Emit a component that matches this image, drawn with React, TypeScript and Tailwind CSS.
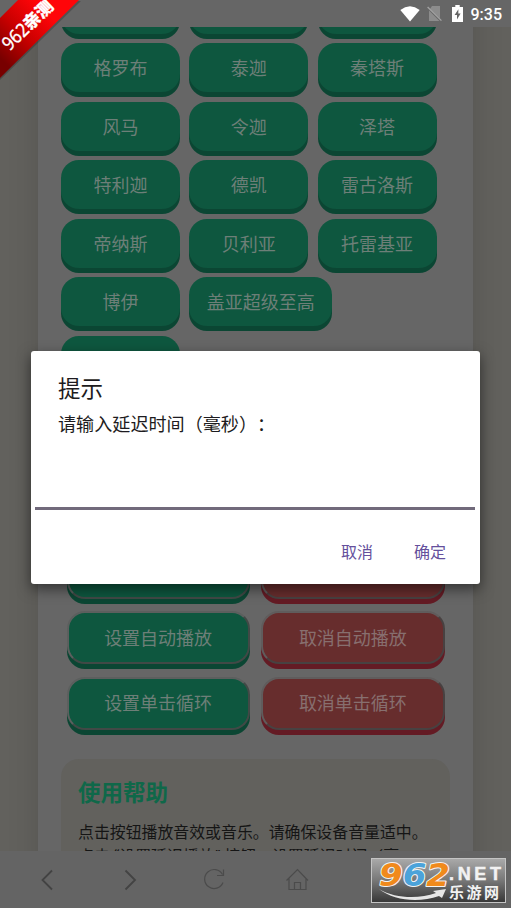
import React from "react";

const soundRows: string[][] = [
  ["", "", ""],
  ["格罗布", "泰迦", "秦塔斯"],
  ["风马", "令迦", "泽塔"],
  ["特利迦", "德凯", "雷古洛斯"],
  ["帝纳斯", "贝利亚", "托雷基亚"],
  ["博伊", "盖亚超级至高"],
  [""],
];

const controls = [
  { on: "设置延迟播放", off: "取消延迟播放" },
  { on: "设置自动播放", off: "取消自动播放" },
  { on: "设置单击循环", off: "取消单击循环" },
];

const StatusBar: React.FC = () => (
  <header className="absolute top-0 left-0 z-10 flex h-[27px] w-full items-center justify-end bg-[#666666] pr-[9px] text-white">
    <svg width="20" height="16" viewBox="0 0 20 16" className="mr-[7px]">
      <path d="M0.3 4 Q10 -3.4 19.7 4 L10 15.6 Z" fill="#fff" />
    </svg>
    <svg width="15" height="17" viewBox="0 0 15 17" className="mr-[10px]">
      <path d="M5 1 H13 V13.5 L3 4 Z M2 5.5 L12.5 16 H2 Z" fill="#8c8c8c" />
      <path d="M0.6 2 L14.4 15.6" stroke="#a3a3a3" strokeWidth="1.3" />
    </svg>
    <svg width="11" height="17" viewBox="0 0 11 17" className="mr-[8px]">
      <path d="M3.3 0 H7.7 V2 H11 V17 H0 V2 H3.3 Z" fill="#fff" />
      <path d="M6.4 4.2 L2.6 10 H5 V14.4 L8.6 8.4 H6.3 Z" fill="#666" />
    </svg>
    <span className="pt-[2px] font-[Roboto] text-[16px] leading-[27px] font-medium">
      9:35
    </span>
  </header>
);

const Ribbon: React.FC = () => (
  <svg
    className="absolute top-0 left-0 z-30"
    width="84"
    height="84"
    viewBox="0 0 84 84"
  >
    <defs>
      <linearGradient
        id="ribbon"
        gradientUnits="userSpaceOnUse"
        x1="8"
        y1="66"
        x2="54"
        y2="20"
      >
        <stop offset="0" stopColor="#780000" />
        <stop offset="0.5" stopColor="#c80000" />
        <stop offset="1" stopColor="#ff0509" />
      </linearGradient>
    </defs>
    <path d="M18 1 H81 L0 80 V19 Z" fill="#000" opacity="0.2" />
    <path d="M18 0 H79 L0 78 V18 Z" fill="url(#ribbon)" />
    <g
      transform="translate(9.5 51.5) rotate(-44)"
      fill="#fff"
      fontFamily="'Noto Sans', 'Noto Sans CJK SC', sans-serif"
    >
      <text
        x="0"
        y="0"
        fontSize="19"
        textLength="29"
        lengthAdjust="spacingAndGlyphs"
        stroke="#fff"
        strokeWidth="0.3"
      >
        962
      </text>
      <text
        x="29"
        y="-0.5"
        fontSize="17"
        fontWeight="900"
        stroke="#fff"
        strokeWidth="0.3"
      >
        亲测
      </text>
    </g>
  </svg>
);

const Watermark: React.FC = () => (
  <svg
    className="absolute top-[858px] left-[371px] z-30"
    width="135"
    height="45"
    viewBox="0 0 135 45"
  >
    <defs>
      <linearGradient id="plate" x1="0" y1="0" x2="0" y2="1">
        <stop offset="0" stopColor="#aaaaaa" />
        <stop offset="0.5" stopColor="#777777" />
        <stop offset="1" stopColor="#363636" />
      </linearGradient>
    </defs>
    <rect
      x="0.5"
      y="0.5"
      width="134"
      height="44"
      fill="url(#plate)"
      stroke="#c4c4c4"
    />
    <path
      d="M8 31 C25 41 48 41 65 35 L62 33 L75 31 L71 40 L68 38 C48 45 23 43 8 31 Z"
      fill="#e6e6e6"
    />
    <text
      x="8"
      y="27.5"
      fontFamily="'DejaVu Sans', sans-serif"
      fontWeight="700"
      fontStyle="italic"
      fontSize="32"
      textLength="71"
      lengthAdjust="spacingAndGlyphs"
      stroke="#f3f3f3"
      strokeWidth="2"
      strokeLinejoin="round"
      paintOrder="stroke"
    >
      <tspan fill="#f08a1c">9</tspan>
      <tspan fill="#4ba3da">6</tspan>
      <tspan fill="#f08a1c">2</tspan>
    </text>
    <text
      x="78"
      y="22"
      fontFamily="'Liberation Sans', sans-serif"
      fontWeight="700"
      fontSize="18"
      textLength="52"
      fill="#f2f2f2"
      stroke="#f2f2f2"
      strokeWidth="0.5"
    >
      .NET
    </text>
    <text
      x="78"
      y="39.5"
      fontFamily="'Noto Sans CJK SC', sans-serif"
      fontWeight="700"
      fontSize="15"
      textLength="50"
      fill="#f2f2f2"
    >
      乐游网
    </text>
  </svg>
);

const SoundButton: React.FC<{ label: string }> = ({ label }) => (
  <button className="h-[49px] min-w-[119px] rounded-[18px] bg-[#0e573f] px-[17.5px] pt-[2px] text-[18px] text-[#6d7f78] shadow-[0_5px_0_#0b4633]">
    {label}
  </button>
);

const NavBar: React.FC = () => (
  <nav className="absolute top-[851px] left-0 z-10 h-[57px] w-full bg-[#646464]">
    <svg width="511" height="57" viewBox="0 0 511 57" fill="none">
      <path d="M52 19.5 L42.5 29 L52 38.5" stroke="#434343" strokeWidth="1.8" />
      <path d="M125.5 19.5 L135 29 L125.5 38.5" stroke="#434343" strokeWidth="1.8" />
      <path
        d="M222.5 23.5 A9.5 9.5 0 1 0 223 31.5 M223.5 18.5 V24.5 H217"
        stroke="#4b4b4b"
        strokeWidth="1.2"
      />
      <path
        d="M286.5 29.5 L297.5 18.5 L308 29.5 M289 27 V38.5 H306 V27 M294.5 38.5 V31.5 H300.5 V38.5"
        stroke="#4b4b4b"
        strokeWidth="1.2"
      />
    </svg>
  </nav>
);

const PromptDialog: React.FC = () => (
  <div className="absolute top-[351px] left-[31px] z-20 flex h-[233px] w-[449px] flex-col rounded-[3px] bg-white pr-[5px] pl-1 shadow-[0_5px_14px_rgba(0,0,0,0.5)]">
    <h2 className="mt-[21px] pl-[23px] text-[22.5px] leading-[34px] text-[#1d1b20]">
      提示
    </h2>
    <p className="mt-[5px] pl-[23px] text-[18.1px] leading-[28px] text-[#1d1b20] [text-spacing-trim:space-all]">
      请输入延迟时间（毫秒）：
    </p>
    <div className="mt-[68px] h-[3px] bg-[#716a7b]" />
    <div className="mt-[29px] flex justify-end gap-[41px] pr-[29px] text-[16px] leading-[28px] text-[#65509c]">
      <button>取消</button>
      <button>确定</button>
    </div>
  </div>
);

export default function App() {
  return (
    <div className="relative h-[908px] w-[511px] overflow-hidden bg-[#62615d] font-['Roboto','Noto_Sans_CJK_SC',sans-serif]">
      <main className="mx-auto ml-[38px] h-full w-[435px] bg-[#666666] px-[23px] shadow-[0_0_30px_rgba(0,0,0,0.13)]">
        {/* Sound buttons */}
        <div className="-mt-[15.5px] flex flex-col gap-[9.5px]">
          {soundRows.map((row, i) => (
            <div key={i} className="flex h-[49px] gap-[9.3px]">
              {row.map((label, j) => (
                <SoundButton key={j} label={label} />
              ))}
            </div>
          ))}
        </div>

        {/* Playback controls */}
        <div className="mt-[161.5px] ml-[5.5px] grid w-[378px] grid-cols-2 gap-x-[11.5px] gap-y-[12.4px]">
          {controls.map((c) => (
            <React.Fragment key={c.on}>
              <button className="h-[53px] rounded-[18px] border-[2.5px] border-t-[#5c5f5e] border-r-[#414946] border-b-[#414946] border-l-[#5c5f5e] bg-[#0e573f] pt-[1px] text-[18px] text-[#6d7f78] shadow-[0_5px_0_#0b4633]">
                {c.on}
              </button>
              <button className="h-[53px] rounded-[18px] border-[2.5px] border-t-[#605c5c] border-r-[#484141] border-b-[#484141] border-l-[#605c5c] bg-[#672d2d] pt-[1px] text-[18px] text-[#876f6f] shadow-[0_5px_0_#641b24]">
                {c.off}
              </button>
            </React.Fragment>
          ))}
        </div>

        {/* Help */}
        <section className="mt-[29px] h-[200px] w-[389px] rounded-[18px] bg-[#62615d] px-[17px] pt-[17.5px]">
          <h3 className="text-[22.5px] leading-[34px] font-bold text-[#0f6849]">
            使用帮助
          </h3>
          <p className="mt-[11px] text-[15.9px] leading-[24px] whitespace-nowrap text-[#151515]">
            点击按钮播放音效或音乐。请确保设备音量适中。
            <br />
            点击 “设置延迟播放” 按钮，设置延迟时间（毫
          </p>
        </section>
      </main>

      <StatusBar />
      <NavBar />
      <PromptDialog />
      <Ribbon />
      <Watermark />
    </div>
  );
}
